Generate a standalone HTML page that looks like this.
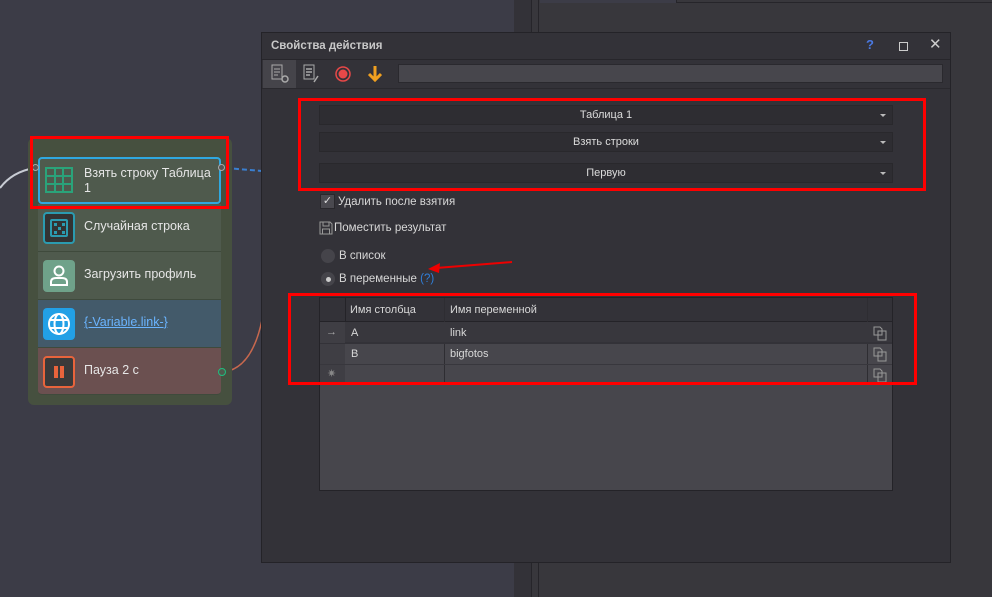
<!DOCTYPE html>
<html><head><meta charset="utf-8"><style>
*{box-sizing:border-box;margin:0;padding:0}
body{width:992px;height:597px;overflow:hidden;background:#3c3c47;font-family:"Liberation Sans","DejaVu Sans",sans-serif;font-size:11px;color:#d8d8d8;position:relative}
.a{position:absolute}
.row{position:absolute;left:38px;width:183px;height:48px;border-bottom:1px solid #3f4a3c;color:#e6e6e6;font-size:12.5px}
.ic{position:absolute;left:5px;top:8px;width:32px;height:32px;border-radius:4px}
.rt{position:absolute;left:46px;top:15px}
.dd{position:absolute;left:319px;width:574px;height:20px;background:#2e2d32;border:1px solid #29282c;text-align:center;line-height:19px;color:#dcdcdc}
.dd:after{content:"";position:absolute;right:6px;top:8px;border-left:3px solid transparent;border-right:3px solid transparent;border-top:3px solid #bbb}
.red{position:absolute;border:3px solid #f00}
</style></head><body>
<div class="a" style="left:514px;top:0;width:478px;height:597px;background:#38373c"></div>
<div class="a" style="left:514px;top:0;width:18px;height:597px;background:#333238"></div>
<div class="a" style="left:531px;top:0;width:1px;height:597px;background:#26252a"></div>
<div class="a" style="left:538px;top:0;width:1px;height:597px;background:#26252a"></div>
<div class="a" style="left:540px;top:0;width:136px;height:3px;background:#3c3c47"></div>
<div class="a" style="left:676px;top:2px;width:316px;height:1px;background:#26252a"></div>
<div class="a" style="left:676px;top:0;width:1px;height:3px;background:#26252a"></div>

<svg class="a" style="left:0;top:0" width="270" height="400">
<path d="M0 188 Q12 172 34 168" stroke="#c8ccd4" stroke-width="2" fill="none"/>
<path d="M226 168 L262 171" stroke="#3a7fd0" stroke-width="2" stroke-dasharray="5 3" fill="none"/>
<path d="M224 372 Q252 368 262 320" stroke="#c8684e" stroke-width="1.5" fill="none"/>
</svg>

<div class="a" style="left:28px;top:138px;width:204px;height:267px;background:#46503f;border-radius:6px"></div>
<div class="row" style="top:157px;height:47px;background:#4f5a4d;border:2px solid #2fa8e0;border-radius:4px">
 <svg class="ic" style="left:4px;top:6px" width="32" height="32"><rect x="2" y="3" width="26" height="24" fill="none" stroke="#2aa37a" stroke-width="2"/><path d="M2 11H28M2 19H28M11 3V27M19 3V27" stroke="#2aa37a" stroke-width="2"/></svg>
 <div class="rt" style="left:44px;top:7px;line-height:15px">Взять строку Таблица<br>1</div>
</div>
<div class="a" style="left:32px;top:164px;width:7px;height:7px;border-radius:50%;background:#555;border:1px solid #aaa"></div>
<div class="a" style="left:218px;top:164px;width:7px;height:7px;border-radius:50%;background:#555;border:1px solid #aaa"></div>
<div class="row" style="top:204px;background:#4f5a4d"><div class="ic" style="background:#333;border:2px solid #2b9bb0"><div class="a" style="left:5px;top:5px;width:18px;height:18px;border:2px solid #2b9bb0;border-radius:2px"></div><div class="a" style="left:13px;top:13px;width:3px;height:3px;background:#2b9bb0;box-shadow:-4px -4px 0 #2b9bb0,4px 4px 0 #2b9bb0,-4px 4px 0 #2b9bb0,4px -4px 0 #2b9bb0"></div></div><div class="rt">Случайная строка</div></div>
<div class="row" style="top:252px;background:#4f5a4d"><div class="ic" style="background:#6fa28a"><svg width="32" height="32"><circle cx="16" cy="11" r="4.5" fill="none" stroke="#fff" stroke-width="2"/><path d="M8 25V22Q8 18 13 18H19Q24 18 24 22V25Z" fill="none" stroke="#fff" stroke-width="2"/></svg></div><div class="rt">Загрузить профиль</div></div>
<div class="row" style="top:300px;background:#435a6a"><div class="ic" style="background:#22a0e6"><svg width="32" height="32"><circle cx="16" cy="16" r="10" fill="none" stroke="#fff" stroke-width="2"/><ellipse cx="16" cy="16" rx="4.5" ry="10" fill="none" stroke="#fff" stroke-width="2"/><path d="M6 12H26M6 20H26" stroke="#fff" stroke-width="2"/></svg></div><div class="rt" style="color:#6ab4ff;text-decoration:underline">{-Variable.link-}</div></div>
<div class="row" style="top:348px;height:47px;background:#6b5050;border-radius:0 0 4px 4px"><div class="ic" style="background:#3a3a3a;border:2px solid #e8643c"><div class="a" style="left:9px;top:8px;width:4px;height:12px;background:#e8643c"></div><div class="a" style="left:15px;top:8px;width:4px;height:12px;background:#e8643c"></div></div><div class="rt">Пауза 2 с</div></div>
<div class="a" style="left:218px;top:368px;width:8px;height:8px;border-radius:50%;background:#4f5a4d;border:1.5px solid #1fbf7f"></div>
<div class="red" style="left:30px;top:136px;width:199px;height:73px"></div>

<div class="a" style="left:261px;top:32px;width:690px;height:531px;background:#333238;border:1px solid #242328"></div>
<div class="a" style="left:262px;top:59px;width:688px;height:1px;background:#27262b"></div>
<div class="a" style="left:271px;top:40px;font-weight:bold;color:#c8c8c8;font-size:11.5px">Свойства действия</div>
<div class="a" style="left:866px;top:37px;color:#4a78e0;font-weight:bold;font-size:13px">?</div>
<div class="a" style="left:899px;top:42px;width:9px;height:9px;border:1px solid #ccc"></div>
<div class="a" style="left:929px;top:35px;color:#ccc;font-size:15px">✕</div>
<div class="a" style="left:263px;top:60px;width:33px;height:28px;background:#45444a"></div>
<svg class="a" style="left:270px;top:63px" width="22" height="22"><rect x="2" y="2" width="10" height="14" fill="none" stroke="#aaa"/><path d="M4 6H10M4 9H10M4 12H8" stroke="#aaa"/><circle cx="15" cy="16" r="3" fill="none" stroke="#aaa" stroke-width="1.5"/></svg>
<svg class="a" style="left:302px;top:63px" width="22" height="22"><rect x="2" y="2" width="10" height="14" fill="none" stroke="#aaa"/><path d="M4 6H10M4 9H10M4 12H8M12 19L16 13" stroke="#aaa" stroke-width="1.5"/></svg>
<svg class="a" style="left:333px;top:64px" width="20" height="20"><circle cx="10" cy="10" r="7" fill="none" stroke="#e84848" stroke-width="1.5"/><circle cx="10" cy="10" r="4.5" fill="#e84848"/></svg>
<svg class="a" style="left:366px;top:64px" width="18" height="20"><path d="M9 2V16M3 10L9 16L15 10" stroke="#f0a020" stroke-width="3" fill="none"/></svg>
<div class="a" style="left:398px;top:64px;width:545px;height:19px;background:#47464c;border:1px solid #2a292e"></div>
<div class="a" style="left:262px;top:88px;width:688px;height:1px;background:#2a292e"></div>

<div class="dd" style="top:105px">Таблица 1</div>
<div class="dd" style="top:132px">Взять строки</div>
<div class="dd" style="top:163px">Первую</div>
<div class="red" style="left:298px;top:98px;width:628px;height:93px"></div>

<div class="a" style="left:320px;top:194px;width:15px;height:15px;background:#4a494f;border:1px solid #29282c;color:#ddd;font-size:11px;line-height:13px;text-align:center">✓</div>
<div class="a" style="left:338px;top:196px;font-size:11.5px">Удалить после взятия</div>
<svg class="a" style="left:319px;top:221px" width="14" height="14"><path d="M1 1H11L13 3V13H1Z" fill="none" stroke="#999"/><rect x="4" y="1" width="6" height="4" fill="none" stroke="#999"/><rect x="3.5" y="8" width="7" height="5" fill="none" stroke="#999"/></svg>
<div class="a" style="left:334px;top:222px;font-size:11.5px">Поместить результат</div>
<div class="a" style="left:321px;top:249px;width:14px;height:14px;border-radius:50%;background:#45444a"></div>
<div class="a" style="left:339px;top:250px;font-size:11.5px">В список</div>
<div class="a" style="left:321px;top:272px;width:14px;height:14px;border-radius:50%;background:#45444a"></div>
<div class="a" style="left:326px;top:277px;width:5px;height:5px;border-radius:50%;background:#ccc"></div>
<div class="a" style="left:339px;top:273px;font-size:11.5px">В переменные <span style="color:#2f7fd8">(?)</span></div>
<svg class="a" style="left:420px;top:258px" width="100" height="20"><path d="M92 4L16 10" stroke="#e00" stroke-width="2"/><path d="M8 11L20 5L19 15Z" fill="#e00"/></svg>

<div class="a" style="left:319px;top:297px;width:574px;height:194px;background:#47464c;border:1px solid #242328"></div>
<div class="a" style="left:320px;top:298px;width:572px;height:24px;background:#333238;border-bottom:1px solid #242328"></div>
<div class="a" style="left:345px;top:298px;width:1px;height:24px;background:#242328"></div>
<div class="a" style="left:444px;top:298px;width:1px;height:86px;background:#2e2d32"></div>
<div class="a" style="left:867px;top:298px;width:1px;height:86px;background:#2e2d32"></div>
<div class="a" style="left:350px;top:304px">Имя столбца</div>
<div class="a" style="left:450px;top:304px">Имя переменной</div>
<div class="a" style="left:320px;top:322px;width:572px;height:21px;background:#38373d;border-bottom:1px solid #333238"></div>
<div class="a" style="left:320px;top:322px;width:25px;height:62px;background:#3f3e44"></div>
<div class="a" style="left:320px;top:343px;width:572px;height:1px;background:#333238"></div>
<div class="a" style="left:320px;top:364px;width:572px;height:1px;background:#38373d"></div>
<div class="a" style="left:326px;top:326px;color:#aaa">→</div>
<div class="a" style="left:327px;top:367px;color:#888">✷</div>
<div class="a" style="left:351px;top:327px">A</div><div class="a" style="left:450px;top:327px">link</div>
<div class="a" style="left:351px;top:348px">B</div><div class="a" style="left:450px;top:348px">bigfotos</div>
<svg class="a" style="left:873px;top:325px" width="16" height="60"><g fill="none" stroke="#999"><path d="M1 2H7L9 4V10H1Z M5 6H13V15H5Z"/><path d="M1 23H7L9 25V31H1Z M5 27H13V36H5Z"/><path d="M1 44H7L9 46V52H1Z M5 48H13V57H5Z"/></g></svg>
<div class="red" style="left:288px;top:293px;width:629px;height:92px"></div>
</body></html>
